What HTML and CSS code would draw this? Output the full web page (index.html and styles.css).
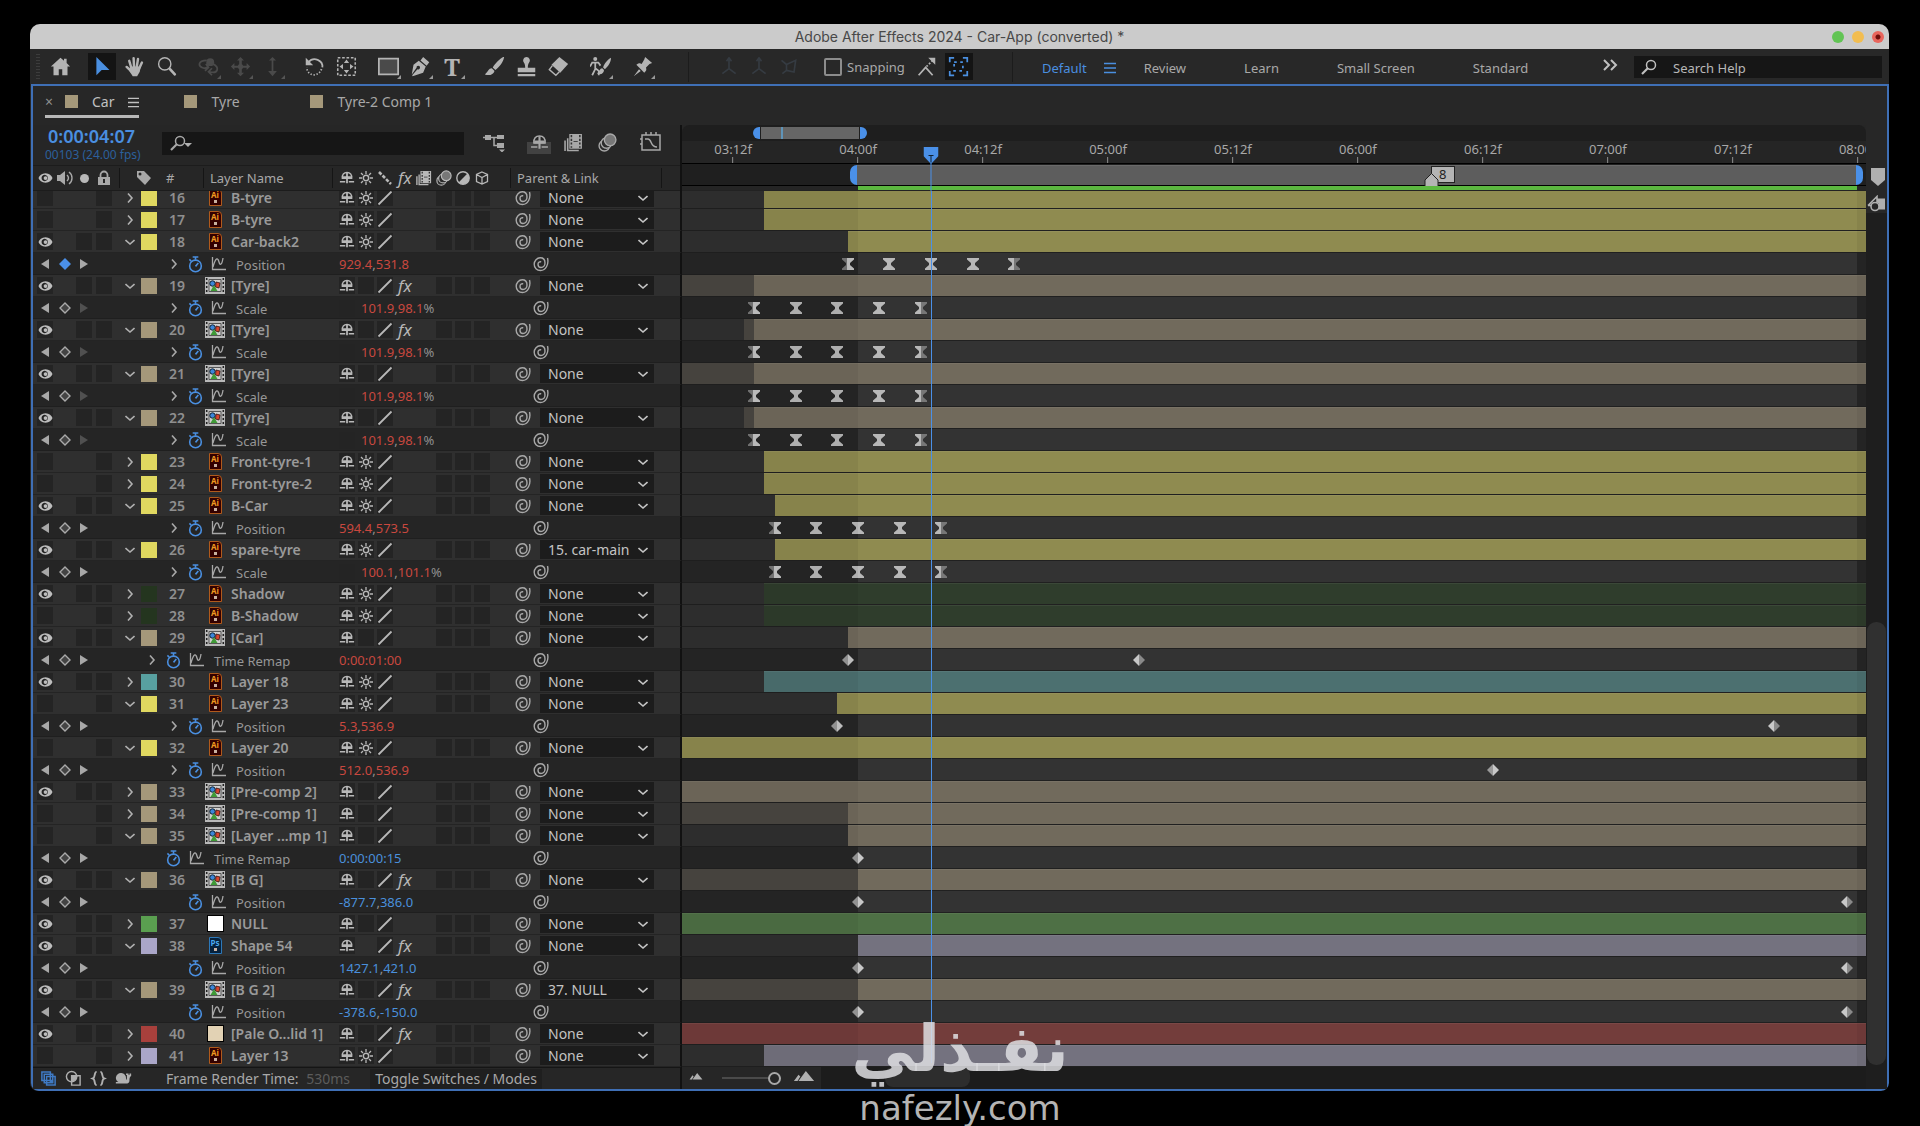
FILE: index.html
```html
<!DOCTYPE html>
<html lang="en">
<head>
<meta charset="utf-8">
<meta name="viewport" content="width=device-width, initial-scale=1">
<title>Adobe After Effects 2024 - Car-App (converted) *</title>
<link rel="stylesheet" href="styles.css">
</head>
<body>
<svg class="sprite" aria-hidden="true">
  <symbol id="home" viewBox="0 0 24 24"><path fill="currentColor" d="M12 2 1 12h3v10h6v-7h4v7h6V12h3l-4-4V3h-3v2.500z"/></symbol>
  <symbol id="arrow" viewBox="0 0 24 24"><path fill="currentColor" d="M5 1v21l6-6h9z"/></symbol>
  <symbol id="hand" viewBox="0 0 24 24"><path fill="none" stroke="currentColor" stroke-width="2.800" stroke-linecap="round" d="M8.500 14 6 5.500M11.500 13 11 2.500M14.500 13l1.500-9.500M17 15l3.500-7.500M9 18l-6-5.500"/><path fill="currentColor" d="M7 12h12l-1 6-3 5h-5l-4-6z"/></symbol>
  <symbol id="lens" viewBox="0 0 24 24"><circle cx="10" cy="9" r="7" fill="none" stroke="currentColor" stroke-width="1.600"/><path stroke="currentColor" stroke-width="3" stroke-linecap="round" d="m16 15 5.500 6"/></symbol>
  <symbol id="orbit" viewBox="0 0 24 24"><circle cx="14" cy="7" r="4.500" fill="currentColor"/><path fill="none" stroke="currentColor" stroke-width="2" d="M10 5C0 5-1 12 7 14l4-1M17 9c8 4 6 12-4 9M9 9l3 4-4 4M16 14l-4 4 4 4"/></symbol>
  <symbol id="pan" viewBox="0 0 24 24"><path fill="currentColor" d="m12 1 4 4h-2.500v4.500a3 3 0 0 1 1.500 1.500H19V8l4 4-4 4v-2.500h-4a3 3 0 0 1-1.500 1.500v4H16l-4 4-4-4h2.500v-4A3 3 0 0 1 9 13.500H5V16l-4-4 4-4v3h4a3 3 0 0 1 1.500-1.500V5H8z"/></symbol>
  <symbol id="dolly" viewBox="0 0 24 24"><path fill="currentColor" d="M11 4h2v13h4l-5 6-5-6h4z"/><path fill="currentColor" d="m12 1 4 4H8z"/></symbol>
  <symbol id="rotate" viewBox="0 0 24 24"><path fill="none" stroke="currentColor" stroke-width="2" d="M5 7c6-7 17-2 16 6"/><path fill="currentColor" d="M2 2v8.500h8.500z"/><path fill="none" stroke="currentColor" stroke-width="2" stroke-dasharray="1.500 2" d="M20 15c-3 9-16 9-17-2"/></symbol>
  <symbol id="anchor" viewBox="0 0 24 24"><path fill="none" stroke="currentColor" stroke-width="1.800" stroke-dasharray="3 2" d="M2 2h20v20H2z"/><path fill="currentColor" d="m12 4 3 4H9zM12 20l-3-4h6zM4 12l4-3v6zM20 12l-4 3V9z"/></symbol>
  <symbol id="rect" viewBox="0 0 24 24"><path fill="#4a4a4a" stroke="currentColor" stroke-width="2" d="M1 3h22v18H1z"/></symbol>
  <symbol id="pen" viewBox="0 0 24 24"><path fill="currentColor" d="m15 1 7 6-3 4-7-6zM10 5.500l8 6.500-3 7L3 23l-.500-1 6-7a2 2 0 1 0-1-1.500L2 21l2-11z"/></symbol>
  <symbol id="brush" viewBox="0 0 24 24"><path fill="currentColor" d="M22 1c-4 2-9 7-12 12l3 3c5-4 9-9 10-15zM9 14c-4 0-4 4-8 7 5 2 10 0 11-4z"/></symbol>
  <symbol id="stamp" viewBox="0 0 24 24"><path fill="currentColor" d="M12 1a4 4 0 0 1 3 6.500c-1 1.500-1.500 3-1.500 6H22v5H2v-5h8.500c0-3-.500-4.500-1.500-6A4 4 0 0 1 12 1zM2 20.500h20V23H2z"/></symbol>
  <symbol id="eraser" viewBox="0 0 24 24"><path fill="currentColor" d="m13 1 10 8-9 10L4 10z"/><path fill="none" stroke="currentColor" stroke-width="1.600" d="m5 11-3.500 4.500L9 22l4-4"/></symbol>
  <symbol id="roto" viewBox="0 0 24 24"><circle cx="6" cy="3.500" r="2.300" fill="currentColor"/><path fill="none" stroke="currentColor" stroke-width="2" d="M0 12l2.500-4.500h7L12 11M6 7v8l-3.500 7M6 14l4 3v5"/><path fill="currentColor" d="M24 2c-4 2-8 7-9 11l2 2c4-3 7-8 7-13zM14 14c-3 0-3 4-6 6 4 2 8 0 8-4z"/></symbol>
  <symbol id="pin" viewBox="0 0 24 24"><path fill="currentColor" d="m15 1 8 7-3 1-4 4c1 3 0 4-2 6L5 10c3-2 4-2 6-1l3-5zM8 15l2 2-8 6z"/></symbol>
  <symbol id="axis" viewBox="0 0 24 24"><path fill="none" stroke="currentColor" stroke-width="2" d="M12 3v11L4 20M12 14l8 6M9 5l3-4 3 4"/></symbol>
  <symbol id="axisview" viewBox="0 0 24 24"><path fill="none" stroke="currentColor" stroke-width="2" d="M3 4l6 5v7l-5 4M9 9l11-5-2 14-9-2"/></symbol>
  <symbol id="snapedge" viewBox="0 0 24 24"><path fill="none" stroke="currentColor" stroke-width="2" d="m3 22 8-9 8 9"/><path fill="currentColor" d="M22 2v8l-8-8z"/><path stroke="currentColor" stroke-width="2" stroke-dasharray="2 2" d="m12 12 7-7"/></symbol>
  <symbol id="snapbox" viewBox="0 0 24 24"><path fill="none" stroke="currentColor" stroke-width="2" d="M2 7V2h5M17 2h5v5M22 17v5h-5M7 22H2v-5"/><path fill="none" stroke="currentColor" stroke-width="2" stroke-dasharray="3 4" d="M7 7h10v10H7z"/></symbol>
  <symbol id="menu" viewBox="0 0 12 12"><path stroke="currentColor" stroke-width="1.500" d="M0 1.500h12M0 6h12M0 10.500h12"/></symbol>
  <symbol id="more" viewBox="0 0 16 12"><path fill="none" stroke="currentColor" stroke-width="2" d="m2 1 5 5-5 5M9 1l5 5-5 5"/></symbol>
  <symbol id="find" viewBox="0 0 16 16"><circle cx="10" cy="6" r="4.500" fill="none" stroke="currentColor" stroke-width="1.500"/><path stroke="currentColor" stroke-width="2.200" d="m7 9-6 6"/></symbol>
  <symbol id="flow" viewBox="0 0 24 18"><path fill="none" stroke="currentColor" stroke-width="1.500" d="M0 4h7M7 4h8M11 4v8h4"/><path fill="currentColor" d="M2 1.500h6v5H2zM14 1.500h7v4h-7zM14 9.500h7v5h-7zM16 16h6l-3 3z"/></symbol>
  <symbol id="shy" viewBox="0 0 18 16"><path fill="none" stroke="currentColor" stroke-width="1.500" d="M3.700 8.500C3.200 4 5.500 1.800 9 1.800s5.800 2.200 5.300 6.700z"/><path fill="currentColor" d="M4 6h10v3H4zM8 2h2v12H8zM1 11.500h6V13H1zM11 11.500h6V13h-6z"/></symbol>
  <symbol id="frames" viewBox="0 0 18 18"><path fill="none" stroke="currentColor" stroke-width="1.500" d="M3.500 5v11.500H14M1 7v10"/><path fill="currentColor" d="M5 1h12v14H5z"/><path stroke="#333" stroke-width="1.500" stroke-dasharray="2 1.500" d="M7 2v12M15 2v12"/><path stroke="#444" d="M9 8h4"/></symbol>
  <symbol id="blur" viewBox="0 0 18 18"><g fill="#2c2c2c" stroke="currentColor" stroke-width="1.300"><circle cx="6" cy="12" r="5"/><circle cx="8" cy="9.500" r="5"/><circle cx="11.500" cy="6.500" r="5.500" fill="#777"/></g></symbol>
  <symbol id="graphed" viewBox="0 0 22 20"><path fill="none" stroke="currentColor" stroke-width="1.500" d="M2 3v15h18V3zM6 0v3M11 0v3M16 0v3M0 7h2M0 12h2M5 7h3c4 0 2 8 9 8"/></symbol>
  <symbol id="eye" viewBox="0 0 16 12"><path fill="currentColor" fill-rule="evenodd" d="M8 1c4 0 6.500 2.500 7.500 5-1 2.500-3.500 5-7.500 5S1.500 8.500.500 6C1.500 3.500 4 1 8 1zm0 1.700A3.400 3.400 0 1 0 8 9.300 3.400 3.400 0 0 0 8 2.700z"/><circle cx="8" cy="6" r="2" fill="currentColor"/></symbol>
  <symbol id="audio" viewBox="0 0 16 16"><path fill="currentColor" d="M0 5h3l5-4v14l-5-4H0z"/><path fill="none" stroke="currentColor" stroke-width="1.400" d="M10 5c2 2 2 4 0 6M12 2c4 3 4 9 0 12"/></symbol>
  <symbol id="lock" viewBox="0 0 14 16"><path fill="none" stroke="currentColor" stroke-width="1.800" d="M3.500 8V5a3.500 3.500 0 0 1 7 0v3"/><path fill="currentColor" fill-rule="evenodd" d="M1 7h12v8H1zm5 2v4h2V9z"/></symbol>
  <symbol id="tag" viewBox="0 0 16 16"><path fill="currentColor" fill-rule="evenodd" d="M1 1h7l7 7-6 7-8-8zm3 1.500a1.500 1.500 0 1 0 0 3 1.500 1.500 0 0 0 0-3z"/></symbol>
  <symbol id="star" viewBox="0 0 16 16"><circle cx="8" cy="8" r="2.700" fill="none" stroke="currentColor" stroke-width="1.500"/><path stroke="currentColor" stroke-width="1.300" d="M8 1v3M8 12v3M1 8h3M12 8h3M3 3l2 2M11 11l2 2M13 3l-2 2M5 11l-2 2"/></symbol>
  <symbol id="slash" viewBox="0 0 16 16"><path stroke="currentColor" stroke-width="1.800" d="M1.500 14.500 14.500 1.500"/></symbol>
  <symbol id="qual" viewBox="0 0 16 16"><path stroke="currentColor" stroke-width="2.600" stroke-dasharray="3.500 1.500" d="m2 2 12 12"/></symbol>
  <symbol id="adjust" viewBox="0 0 16 16"><circle cx="8" cy="8" r="6.200" fill="none" stroke="currentColor" stroke-width="1.400"/><path fill="currentColor" d="M12.400 3.600A6.200 6.200 0 0 1 3.600 12.400z"/></symbol>
  <symbol id="cube" viewBox="0 0 16 16"><path fill="none" stroke="currentColor" stroke-width="1.300" d="m8 2 5.500 2.500v7L8 14l-5.500-2.500v-7zM2.500 4.500 8 7.500l5.500-3M8 7.500V14"/></symbol>
  <symbol id="right" viewBox="0 0 10 10"><path fill="none" stroke="currentColor" stroke-width="1.600" d="m3 .500 4 4.500-4 4.500"/></symbol>
  <symbol id="down" viewBox="0 0 10 10"><path fill="none" stroke="currentColor" stroke-width="1.600" d="m.500 3 4.500 4 4.500-4"/></symbol>
  <symbol id="whip" viewBox="0 0 16 16"><path fill="none" stroke="currentColor" stroke-width="1.400" d="M14.500 2C16 8 13 14.500 7.500 14.500 3.800 14.500 1.200 12 1.200 8.300S4 1.800 7.200 1.800 12 4 12 7s-1.800 4.500-4 4.500S5 10 5 8.300 6.300 5.500 8.200 5.800"/></symbol>
  <symbol id="watch" viewBox="0 0 16 18"><circle cx="8" cy="10.500" r="6.200" fill="none" stroke="currentColor" stroke-width="1.700"/><path fill="none" stroke="currentColor" stroke-width="1.700" d="M5 1h6M8 1v3M1.500 3.500l2 2M8 11l3-3.500"/></symbol>
  <symbol id="graph" viewBox="0 0 16 14"><path fill="none" stroke="currentColor" stroke-width="1.300" d="M1.500 0v12.500H15M2 10C5-1 7 1 8 5s3 3 4-4"/></symbol>
  <symbol id="prev" viewBox="0 0 8 10"><path fill="currentColor" d="M8 0v10L0 5z"/></symbol>
  <symbol id="next" viewBox="0 0 8 10"><path fill="currentColor" d="M0 0v10l8-5z"/></symbol>
  <symbol id="key" viewBox="0 0 12 12"><path fill="#444" stroke="#aaa" stroke-width="1.400" d="m6 1 5 5-5 5-5-5z"/></symbol>
  <symbol id="keyon" viewBox="0 0 12 12"><path fill="#4a8fe8" d="m6 0 6 6-6 6-6-6z"/></symbol>
  <symbol id="comp" viewBox="0 0 20 17"><path fill="#b9b9b9" d="M0 0h20v17H0z"/><path stroke="#222" stroke-width="1.500" stroke-dasharray="2 2" d="M1.700 1v15M18.300 1v15"/><path stroke="#555" fill="#d0d0d0" d="M4 2.500h12v12H4z"/><circle cx="7.500" cy="6.500" r="2.700" fill="#3c86d8" stroke="#123"/><path fill="#d8452e" stroke="#311" stroke-width=".8" d="m11 5 4 1-1 5-3.500-1z"/><path fill="#3f9a37" d="m9 8 3.500 6h-7z"/></symbol>
  <symbol id="hourglass" viewBox="0 0 12 12"><path fill="#b8b8b8" d="M0 0h12v1.500L8 5v2l4 3.500V12H0v-1.500L4 7V5L0 1.500z"/></symbol>
  <symbol id="hourin" viewBox="0 0 12 12"><path fill="#777" d="M0 0h6v12H0v-1.500L4 7V5L0 1.500z"/><path fill="#c4c4c4" d="M5 0h7v1.500L8 5v2l4 3.500V12H5z"/></symbol>
  <symbol id="hourout" viewBox="0 0 12 12"><path fill="#b8b8b8" d="M0 0h6v12H0v-1.500L4 7V5L0 1.500z"/><path fill="#777" d="M6 0h6v1.500L8 5v2l4 3.500V12H6z"/></symbol>
  <symbol id="diain" viewBox="0 0 12 12"><path fill="#999" d="M6 0v12L0 6z"/><path fill="#c8c8c8" d="M6 0v12l6-6z"/></symbol>
  <symbol id="diaout" viewBox="0 0 12 12"><path fill="#c8c8c8" d="M6 0v12L0 6z"/><path fill="#8a8a8a" d="M6 0v12l6-6z"/></symbol>
  <symbol id="copies" viewBox="0 0 18 18"><g fill="#232323" stroke="currentColor" stroke-width="1.600"><path d="M2 2h9v9H2zM4.500 4.500h9v9h-9zM7 7h9v9H7z"/><path d="M11 11h1v1h-1z"/></g></symbol>
  <symbol id="modes" viewBox="0 0 18 18"><circle cx="7" cy="7" r="5.500" fill="none" stroke="currentColor" stroke-width="1.500"/><path fill="none" stroke="currentColor" stroke-width="1.500" d="M7 6h9v10H7z"/><path fill="currentColor" d="M7 6h6a6 6 0 0 1-6 6z"/></symbol>
  <symbol id="braces" viewBox="0 0 18 18"><path fill="none" stroke="currentColor" stroke-width="2" d="M7 2C4 2 6 8 3 9c3 1 1 7 4 7M11 2c3 0 1 6 4 7-3 1-1 7-4 7"/></symbol>
  <symbol id="snail" viewBox="0 0 20 18"><path fill="currentColor" d="M1 8a6 6 0 0 1 12 1l1 2V5h-1V3h3v2h1V3h2v3c-2 1-2 3-2 6 0 2-2 3-4 3H1v-2h3c-2-1-3-3-3-5z"/></symbol>
  <symbol id="hills" viewBox="0 0 22 12"><path fill="currentColor" d="m0 11 5-7 2 2-3 5zM5 11l8-11 9 11z"/></symbol>
  <symbol id="bin" viewBox="0 0 18 16"><path fill="currentColor" d="M10 3h8v11h-6V8l-2-1z"/><path fill="none" stroke="currentColor" stroke-width="1.600" d="m1 10 9-9v6M1 10h6"/><circle cx="8" cy="11" r="4" fill="#262626" stroke="currentColor" stroke-width="1.600"/></symbol>
</svg>

<main class="window">
  <header class="titlebar">
    <h1>Adobe After Effects 2024 - Car-App (converted) *</h1>
    <div class="lights"><button class="light green" aria-label="Zoom"></button><button class="light amber" aria-label="Minimise"></button><button class="light red" aria-label="Close"></button></div>
  </header>

  <nav class="toolbar" aria-label="Tools">
    <div class="tools" id="tools"></div>
    <div class="snap">
      <span class="axes"><svg><use href="#axis"/></svg><svg><use href="#axis"/></svg><svg><use href="#axisview"/></svg></span>
      <label class="check"><input type="checkbox">Snapping</label>
      <button class="tool" aria-label="Snap to edges"><svg><use href="#snapedge"/></svg></button>
      <button class="tool active" aria-label="Snap to box"><svg><use href="#snapbox"/></svg></button>
    </div>
    <div class="spaces">
      <a href="#" class="current">Default</a>
      <button class="spacemenu" aria-label="Workspace menu"><svg><use href="#menu"/></svg></button>
      <a href="#">Review</a><a href="#">Learn</a><a href="#">Small Screen</a><a href="#">Standard</a>
      <button class="more" aria-label="More workspaces"><svg><use href="#more"/></svg></button>
    </div>
    <label class="help"><svg><use href="#find"/></svg><input type="text" aria-label="Search Help" placeholder="Search Help"></label>
  </nav>

  <section class="panel">
    <div class="tabs">
      <a href="#" class="tab selected"><span class="x">×</span><i></i>Car<svg><use href="#menu"/></svg></a>
      <a href="#" class="tab"><i></i>Tyre</a>
      <a href="#" class="tab"><i></i>Tyre-2 Comp 1</a>
    </div>

    <div class="body">
      <div class="main">
        <div class="top">
          <div class="controls">
            <div class="search-line">
              <div class="time"><strong>0:00:04:07</strong><span>00103 (24.00 fps)</span></div>
              <label class="filter"><svg><use href="#find"/></svg><b></b><input type="text" aria-label="Filter layers"></label>
              <button aria-label="Flowchart"><svg class="w24"><use href="#flow"/></svg></button>
              <button class="on" aria-label="Hide shy layers"><svg><use href="#shy"/></svg></button>
              <button aria-label="Frame blending"><svg><use href="#frames"/></svg></button>
              <button aria-label="Motion blur"><svg><use href="#blur"/></svg></button>
              <button class="last" aria-label="Graph editor"><svg class="w22"><use href="#graphed"/></svg></button>
            </div>
            <div class="cols head">
              <span class="c"><svg class="eye"><use href="#eye"/></svg></span>
              <span class="c"><svg><use href="#audio"/></svg></span>
              <span class="c"><i class="solo"></i></span>
              <span class="c"><svg><use href="#lock"/></svg></span>
              <span class="h-tag"><svg><use href="#tag"/></svg></span>
              <span class="h-num">#</span>
              <span class="h-name">Layer Name</span>
              <span class="switches">
                <svg><use href="#shy"/></svg><svg><use href="#star"/></svg><svg><use href="#qual"/></svg><em>fx</em><svg><use href="#frames"/></svg><svg><use href="#blur"/></svg><svg><use href="#adjust"/></svg><svg><use href="#cube"/></svg>
              </span>
              <span class="h-parent">Parent &amp; Link</span>
            </div>
          </div>
          <div class="ruler" id="ruler">
            <div class="navigator"><i class="lead"></i><i class="grab left"></i><i class="span"></i><i class="grab right"></i></div>
            <div class="scale" id="scale"></div>
            <div class="workarea"><i class="outer"></i><i class="grab left"></i><i class="range"></i><i class="grab right"></i></div>
            <div class="cache"><i></i></div>
          </div>
        </div>
        <div class="layers">
          <div class="list" id="layers"></div>
          <div class="over"><i class="before"></i><i class="after"></i><i class="cti"></i></div>
        </div>
        <footer class="foot">
          <div class="foot-left">
            <button class="blue" aria-label="Layer switches"><svg><use href="#copies"/></svg></button>
            <button aria-label="Transfer controls"><svg><use href="#modes"/></svg></button>
            <button aria-label="In and out"><svg><use href="#braces"/></svg></button>
            <button aria-label="Render time"><svg><use href="#snail"/></svg></button>
            <span class="render">Frame Render Time: <b>530ms</b></span>
            <button class="toggle">Toggle Switches / Modes</button>
          </div>
          <div class="foot-zoom"><svg class="far"><use href="#hills"/></svg><input type="range" value="100" aria-label="Timeline zoom"><svg class="near"><use href="#hills"/></svg></div>
          <div class="hscroll"><i></i></div>
        </footer>
      </div>
      <aside class="rail">
        <div class="rail-top"><svg class="mark" viewBox="0 0 14 18"><path fill="currentColor" d="M0 0h14v12l-7 6-7-6z"/></svg><svg class="bin"><use href="#bin"/></svg></div>
        <div class="vscroll"><i></i></div>
      </aside>
    </div>
  </section>
</main>

<div class="brand"><span lang="ar" dir="rtl">نفـذلي</span><small>nafezly.com</small></div>
<script src="script.js"></script>
</body>
</html>
```

FILE: styles.css
```css
* { box-sizing: border-box; }
:root {
  --blue: #4a8fe0;
  --line: #3f6fb5;
  --bg: #262626;
  --txt: #a8a8a8;
  --dark: #161616;
}
body {
  margin: 0;
  padding: 24px 31px 36px 30px;
  background: #000;
  color: var(--txt);
  font: 14px/20px "Noto Sans", "Open Sans", sans-serif;
  position: relative;
}
.sprite { position: absolute; width: 0; height: 0; }
svg { display: block; width: 16px; height: 16px; flex: none; }
button { border: 0; padding: 0; background: none; color: inherit; font: inherit; display: grid; place-items: center; }
input, select { font: inherit; color: inherit; }
a { color: inherit; text-decoration: none; }
i { display: block; }

.window { background: var(--bg); border-radius: 10px 10px 8px 8px; overflow: hidden; }
.titlebar { display: grid; grid-template-columns: 1fr auto 1fr; align-items: center; height: 25px; background: #cbcbcb; }
.titlebar h1 { grid-column: 2; margin: 0; font: 14px/24px Inter, sans-serif; color: #484848; }
.lights { display: flex; justify-content: flex-end; gap: 8px; padding-right: 5px; }
.light { width: 12px; height: 12px; border-radius: 50%; }
.green { background: #62c454; }
.amber { background: #f2bd50; }
.red { background: radial-gradient(circle, #6d0d0a 2px, #e8655c 3px); }

/* Toolbar */
.toolbar { display: flex; align-items: center; height: 35px; background: #282828; }
.tools { display: flex; align-items: center; padding-left: 6px; flex: none; width: 659px; border-right: 1px solid #1c1c1c; height: 30px; }
.tool { position: relative; width: 28px; height: 27px; flex: none; margin-right: 4px; color: #b4b4b4; }
.tool svg { width: 21px; height: 21px; }
.tool.wide { margin-right: 14px; }
.tool.dim { color: #4a4a4a; }
.tool.active { background: #141414; color: var(--blue); }
.tool.sub::after { content: ""; position: absolute; right: 1px; bottom: 1px; border: 2px solid; border-color: transparent #999 #999 transparent; }
.tool.dim::after { opacity: .4; }
.tool.type { font: bold 24px/26px "Noto Serif", "Liberation Serif", serif; }
.grip { width: 4px; height: 26px; margin-right: 6px; background: repeating-linear-gradient(#3c3c3c 0 1px, #282828 1px 3px); }
.snap { display: flex; align-items: center; flex: none; width: 324px; height: 30px; padding-left: 30px; border-right: 1px solid #1c1c1c; font-size: 13px; }
.axes { display: flex; gap: 10px; color: #353b42; margin-right: 25px; }
.axes svg { width: 20px; height: 20px; }
.check { display: flex; align-items: center; gap: 5px; margin-right: 8px; }
.check input { appearance: none; width: 18px; height: 18px; margin: 0; border: 2px solid #8c8c8c; border-radius: 2px; }
.spaces { display: flex; align-items: center; flex: 1; padding: 3px 16px 0 29px; font-size: 13px; }
.spaces a { margin-right: 58px; white-space: nowrap; }
.spaces .current { color: var(--blue); margin-right: 17px; }
.spacemenu { color: var(--blue); margin-right: 28px; }
.spacemenu svg { width: 12px; height: 12px; }
.more { margin: 0 0 6px auto; color: #c0c0c0; }
.more svg { width: 16px; height: 12px; }
.help { display: flex; align-items: center; gap: 16px; width: 248px; height: 22px; padding-left: 7px; margin-right: 7px; background: var(--dark); color: #c0c0c0; flex: none; }
.help input { width: 180px; border: 0; padding: 2px 0 0; background: none; font-size: 13px; }
.help input::placeholder { color: #b8b8b8; opacity: 1; }

/* Panel */
.panel { border: 2px solid var(--line); border-radius: 0 0 8px 8px; margin-left: 1px; }
.tabs { display: flex; height: 39px; padding: 0 12px; gap: 45px; background: #272727; }
.tab { display: flex; align-items: center; gap: 14px; height: 32px; min-width: 81px; }
.tab i { width: 13px; height: 13px; background: #a5987a; margin-bottom: 2px; }
.tab svg { width: 11px; height: 11px; }
.tab.selected { border-bottom: 3px solid #b8b8b8; color: #c0c0c0; padding-top: 3px; }
.tab .x { width: 6px; color: #909090; }

.body { display: flex; }
.main { flex: 1; min-width: 0; }
.top { display: flex; height: 66px; }
.controls { width: 649px; flex: none; border-right: 2px solid #111; }
.search-line { display: flex; align-items: center; height: 41px; border-bottom: 1px solid #1c1c1c; }
.time { display: flex; flex-direction: column; width: 129px; padding-left: 12px; color: var(--blue); white-space: nowrap; }
.time strong { font: 600 18px/20px "Noto Sans", sans-serif; padding-left: 3px; }
.time span { font-size: 12px; line-height: 18px; color: #2c609c; }
.filter { display: flex; align-items: center; width: 302px; height: 23px; margin: 0 19px 4px 0; padding-left: 8px; background: var(--dark); }
.filter input { width: 250px; border: 0; background: none; outline: 0; }
.filter b { border: 4px solid transparent; border-top-color: #b0b0b0; margin: 8px 0 0 -2px; }
.search-line button { width: 24px; height: 24px; margin: 0 10px 6px 0; color: #a8a8a8; }
.search-line button:first-of-type { margin-right: 20px; }
.search-line button svg { width: 19px; height: 19px; }
.search-line .w24 { width: 24px; }
.search-line .last { margin-left: 10px; }
.search-line .last .w22 { width: 22px; height: 20px; }
.search-line .on { background: linear-gradient(transparent 50%, #424242 50%); }

.cols { display: grid; grid-template-columns: 20px 19px 20px 19px 28px 16px 46px 24px 110px 155px 18px 26px 4px 114px 1fr; width: 649px; flex: none; padding-left: 2px; align-items: center; border-right: 2px solid #111; white-space: nowrap; }
.c { display: grid; place-items: center; }
.head { width: 647px; height: 25px; border-right: 0; font-size: 13px; border-bottom: 1px solid #1c1c1c; }
.head svg { width: 16px; height: 16px; }
.head .eye { width: 15px; height: 12px; }
.solo { width: 9px; height: 9px; border-radius: 50%; background: #b8b8b8; }
.h-tag { grid-column: 5 / 7; display: grid; align-items: center; margin-left: 6px; padding-left: 16px; border-left: 1px solid #151515; height: 20px; }
.h-num { padding-left: 9px; }
.h-name { grid-column: 8 / 10; border-left: 1px solid #151515; border-right: 1px solid #151515; margin-right: 4px; padding-left: 6px; }
.h-parent { grid-column: 12 / 16; border-left: 1px solid #151515; border-right: 1px solid #151515; padding-left: 6px; margin-right: 18px; }
.switches { display: grid; grid-template-columns: repeat(8, 1fr); justify-items: center; align-items: center; color: #b8b8b8; }
.switches em { font: italic 17px/18px "Noto Sans", sans-serif; }

/* Ruler: frame positions are percentages of the visible range */
.ruler { flex: 1; position: relative; background: #252525; border-radius: 8px 8px 0 0; }
.navigator { display: flex; height: 16px; padding: 2px 0; background: #1e1e1e; border-radius: 8px 8px 0 0; }
.navigator .lead { width: 6%; }
.navigator .span { width: 98px; margin: 0 1px; background: linear-gradient(90deg, #666 0 20px, #5f94b8 20px 22px, #666 22px); }
.grab { width: 7px; background: #4a90e8; }
.grab.left { border-radius: 7px 0 0 7px; }
.grab.right { border-radius: 0 7px 7px 0; }
.scale { position: relative; height: 23px; overflow: hidden; font-size: 13px; line-height: 16px; border-bottom: 1px solid #000; }
.stop { position: absolute; top: 0; bottom: 0; display: flex; flex-direction: column; align-items: center; transform: translateX(-50%); }
.stop::after { content: ""; width: 1px; flex: 1; background: #8f8f8f; }
.workarea { display: flex; height: 22px; background: #1f1f1f; border-bottom: 1px solid #000; padding-top: 1px; }
.workarea .outer { width: 14.864%; margin-right: -8px; }
.workarea .range { width: 84.388%; background: #5d5d5d; border-top: 1px solid #6a6a6a; }
.cache { height: 5px; padding-left: 14.864%; border-bottom: 1px solid #222; }
.cache i { width: 99.100%; height: 4px; background: #5cb840; }
.marker { position: absolute; top: 41px; display: flex; height: 17px; width: 24px; justify-content: center; background: #b4b4b4; border: 1px solid #222; color: #222; font-size: 13px; line-height: 15px; }
.marker svg { position: absolute; left: -8px; top: 6px; width: 15px; height: 13px; }
.ctihead { position: absolute; top: 21px; bottom: 0; width: 15px; transform: translateX(-50%); }
.ctihead svg { width: 15px; height: 18px; }
.ctihead::after { content: ""; position: absolute; left: 7px; top: 16px; bottom: 0; width: 1px; background: #4a90e8; }

/* Layer rows */
.layers { position: relative; overflow: hidden; background: var(--bg); }
.list { margin-top: -4px; }
.row { display: flex; height: 22px; }
.row .cols { border-bottom: 1px solid #242424; background: #2f2f2f; }
.row.prop .cols { background: #252525; border-bottom-color: #1f1f1f; }
.box { width: 16px; height: 17px; background: #242424; display: grid; place-items: center; }
.eye { width: 15px; height: 12px; color: #bdbdbd; }
.twirl { justify-self: end; margin-right: 6px; color: #b0b0b0; }
.twirl svg { width: 10px; height: 10px; }
.swatch { width: 16px; height: 16px; }
.num { padding-left: 12px; font-weight: 600; color: #8f8f8f; }
.kind { justify-self: center; }
.kind svg { width: 20px; height: 17px; }
.file { width: 13px; height: 17px; border: 1px solid #b05a1c; background: #300; color: #f09a20; font: bold 8px/9px "Noto Sans", sans-serif; text-align: center; border-radius: 0 4px 0 0; }
.file::after { content: ""; display: block; width: 3px; height: 3px; margin: 1px auto 0; background: #c8b0a0; }
.file.ps { border-color: #2d78b8; background: #06213c; color: #4aa8f0; }
.solid { width: 17px; height: 17px; border: 1px solid #000; }
.name { padding-left: 4px; font-weight: 600; color: #9a9a9a; overflow: hidden; }
.switches .box svg { width: 16px; height: 16px; }
.row .whip { color: #a8a8a8; justify-self: center; }
.row .whip svg { width: 16px; height: 16px; }
.pick { grid-column: 14; display: grid; align-items: center; height: 19px; background: #1c1c1c; color: #c4c4c4; }
.pick select, .pick svg { grid-area: 1 / 1; }
.pick select { appearance: none; border: 0; width: 100%; height: 19px; padding: 0 0 0 8px; background: none; line-height: 18px; }
.pick svg { width: 10px; height: 10px; justify-self: end; margin-right: 6px; pointer-events: none; }

.prop .keys { grid-column: 1 / 4; display: flex; align-items: center; padding-left: 6px; }
.keys button { width: 8px; margin-right: 10px; }
.keys .k { width: 12px; margin-right: 9px; }
.keys svg { width: 8px; height: 10px; }
.keys .k svg { width: 12px; height: 12px; }
.keys .off { color: #505050; }
.prop .stack { grid-column: 5 / 10; display: flex; align-items: center; padding-left: 56px; }
.prop.root .stack { padding-left: 34px; }
.stack .tw { width: 10px; height: 10px; margin-right: 9px; }
.stack .watch { width: 15px; height: 17px; color: #4a8fe0; margin-right: 8px; }
.stack .graph { width: 16px; height: 14px; margin-right: 9px; }
.stack .label { padding-top: 2px; color: #979797; font-size: 13px; }
.value { grid-column: 10; display: flex; align-items: center; padding-left: 2px; color: #909090; font-size: 13px; }
.value .box { margin-right: 6px; }
.value b { font-weight: 400; color: #c9483f; }
.value.free b { color: #4a90dc; }
.prop .whip { grid-column: 12 / 15; justify-self: start; margin-left: 23px; }

.track { flex: 1; display: flex; position: relative; background: #303030; border-bottom: 1px solid #202020; }
.prop .track { background: linear-gradient(90deg, #262626 14.864%, #333 14.864% 99.240%, #262626 99.240%); }
.bar { flex: 1; border-top: 1px solid rgba(255, 255, 255, .06); }
.ghost { background: #4a4742; }
.track svg { position: absolute; top: 5px; width: 12px; height: 12px; transform: translateX(-50%); }
.yellow { background: #8f8b50; }
.sand { background: #716a5c; }
.forest { background: #2f3d2c; }
.teal { background: #4c7070; }
.leaf { background: #4e7045; }
.lilac { background: #74727f; }
.brick { background: #733d3b; }
.over { position: absolute; left: 649px; right: 0; top: 0; bottom: 0; pointer-events: none; display: flex; }
.over .before { width: 14.864%; background: rgba(0, 0, 0, .05); }
.over .after { width: 0.760%; margin-left: auto; background: rgba(0, 0, 0, .05); }
.over .cti { position: absolute; left: 21.030%; top: 0; bottom: 4px; width: 1px; background: #4a90e8; }

/* Footer */
.foot { display: flex; height: 22px; background: #1c1c1c; }
.foot-left { display: flex; align-items: center; width: 649px; padding-left: 6px; background: #262626; border-top: 1px solid #151515; border-right: 2px solid #111; }
.foot-left button { width: 18px; margin-right: 7px; color: #b0b0b0; }
.foot-left .blue { color: #3f7ac4; }
.foot-left svg { width: 17px; height: 17px; }
.render { margin-left: 27px; }
.render b { font-weight: 400; color: #5c5c5c; margin-left: 4px; }
.foot-left .toggle { width: 172px; height: 20px; margin-left: 20px; background: #1f1f1f; color: #a8a8a8; white-space: nowrap; }
.foot-zoom { display: flex; align-items: center; width: 139px; padding-left: 7px; background: #262626; color: #b0b0b0; }
.foot-zoom .far { width: 14px; height: 7px; margin: 0 19px 3px 0; }
.foot-zoom .near { width: 22px; height: 11px; margin: 0 0 3px 12px; }
.foot-zoom input { appearance: none; width: 59px; height: 13px; margin: 0; background: linear-gradient(transparent 5px, #4a4a4a 5px 7px, transparent 7px); }
.foot-zoom input::-webkit-slider-thumb { appearance: none; width: 13px; height: 13px; border: 2px solid #a8a8a8; border-radius: 50%; background: #262626; }
.hscroll { flex: 1; padding-left: 64px; }
.hscroll i { width: 85px; height: 20px; border-radius: 8px; background: #2d2d2d; }
.rail { width: 21px; background: #1e1e1e; display: flex; flex-direction: column; color: #b0b0b0; }
.rail-top { height: 88px; padding: 43px 0 0 5px; background: #272727; }
.rail .mark { width: 14px; height: 18px; }
.rail .bin { width: 18px; height: 17px; margin: 9px 0 0 -4px; }
.vscroll { flex: 1; display: flex; flex-direction: column; justify-content: flex-end; padding: 0 1px 24px; }
.vscroll i { height: 52%; border-radius: 9px; background: #303030; }

.brand { position: absolute; left: 0; right: 0; bottom: 0; display: flex; flex-direction: column; align-items: center; color: rgba(222, 222, 226, .85); pointer-events: none; }
.brand span { font: bold 64px/80px "DejaVu Sans", sans-serif; }
.brand small { font: 34px/38px "DejaVu Sans", sans-serif; color: #b4b4b4; }
```

FILE: script.js
```js
const FIRST = 79.09;   // frame at the left edge of the timeline
const SHOWN = 113.7;   // frames visible
const pos = f => ((f - FIRST) / SHOWN * 100).toFixed(3) + '%';
const icon = (id, cls = '') => `<svg${cls && ` class="${cls}"`}><use href="#${id}"/></svg>`;

const tools = [
  ['home', 'Home', 'wide'], ['arrow', 'Selection', 'active'], ['hand', 'Hand', ''], ['lens', 'Zoom', 'wide'],
  ['orbit', 'Orbit', 'dim sub'], ['pan', 'Pan camera', 'dim sub'], ['dolly', 'Dolly', 'dim sub wide'],
  ['rotate', 'Rotation', ''], ['anchor', 'Anchor point', 'wide'],
  ['rect', 'Rectangle', 'sub'], ['pen', 'Pen', 'sub'], ['type', 'Type', 'sub wide'],
  ['brush', 'Brush', ''], ['stamp', 'Clone stamp', ''], ['eraser', 'Eraser', 'wide'],
  ['roto', 'Roto brush', 'sub wide'], ['pin', 'Puppet pin', 'sub']
];
document.getElementById('tools').innerHTML = '<span class="grip"></span>' + tools.map(([id, name, cls]) =>
  id === 'type' ? `<button class="tool type ${cls}" aria-label="${name}">T</button>`
                : `<button class="tool ${cls}" aria-label="${name}">${icon(id)}</button>`).join('');

const labels = ['03:12f', '04:00f', '04:12f', '05:00f', '05:12f', '06:00f', '06:12f', '07:00f', '07:12f', '08:00f'];
document.getElementById('scale').innerHTML = labels.map((t, i) => `<span class="stop" style="left:${pos(84 + i * 12)}">${t}</span>`).join('');
document.getElementById('ruler').insertAdjacentHTML('beforeend',
  `<span class="marker" style="left:${pos(151)}">8<svg viewBox="0 0 15 13"><path d="M1 13V7l6.500-6.500L14 7v6" fill="#b4b4b4" stroke="#222"/></svg></span>
   <span class="ctihead" style="left:${pos(103)}"><svg viewBox="0 0 15 18"><path fill="#4a90e8" d="M0 1h15v9l-7.500 8L0 10z"/><path stroke="#123" d="M5 9.500h5M7.500 9v9"/></svg></span>`);

const swatches = { yellow: '#e0d860', sand: '#a5987a', forest: '#24351f', teal: '#58a0a0', leaf: '#5a9f50', lilac: '#aaa6c8', brick: '#a8403c' };

const L = (n, name, kind, color, start, o = {}) => ({ n, name, kind, color, start, ...o });
const P = (label, value, keys, o = {}) => ({ label, value, keys, ...o });
const pos5 = [95, 99, 103, 107, 111], scale5 = [86, 90, 94, 98, 102], car5 = [88, 92, 96, 100, 104];
const tyre = () => P('Scale', '101.9,98.1', scale5, { pct: 1, end: 1 });
const hid = { hidden: 1 }, open = { open: 1 };

const rows = [
  L(16, 'B-tyre', 'ai', 'yellow', 87, hid), L(17, 'B-tyre', 'ai', 'yellow', 87, hid),
  L(18, 'Car-back2', 'ai', 'yellow', 95, open), P('Position', '929.4,531.8', pos5, { on: 1 }),
  L(19, '[Tyre]', 'comp', 'sand', 86, { open: 1, fx: 1, ghost: FIRST }), tyre(),
  L(20, '[Tyre]', 'comp', 'sand', 86, { open: 1, fx: 1, ghost: 85 }), tyre(),
  L(21, '[Tyre]', 'comp', 'sand', 86, { open: 1, ghost: FIRST }), tyre(),
  L(22, '[Tyre]', 'comp', 'sand', 86, { open: 1, ghost: 85 }), tyre(),
  L(23, 'Front-tyre-1', 'ai', 'yellow', 87, hid), L(24, 'Front-tyre-2', 'ai', 'yellow', 87, hid),
  L(25, 'B-Car', 'ai', 'yellow', 88, open), P('Position', '594.4,573.5', car5),
  L(26, 'spare-tyre', 'ai', 'yellow', 88, { open: 1, parent: '15. car-main' }), P('Scale', '100.1,101.1', car5, { pct: 1 }),
  L(27, 'Shadow', 'ai', 'forest', 87), L(28, 'B-Shadow', 'ai', 'forest', 87, hid),
  L(29, '[Car]', 'comp', 'sand', 95, open), P('Time Remap', '0:00:01:00', [95, 123], { root: 1, dia: 1 }),
  L(30, 'Layer 18', 'ai', 'teal', 87), L(31, 'Layer 23', 'ai', 'yellow', 94, { hidden: 1, open: 1 }),
  P('Position', '5.3,536.9', [94, 184], { dia: 1 }),
  L(32, 'Layer 20', 'ai', 'yellow', FIRST, { hidden: 1, open: 1 }), P('Position', '512.0,536.9', [157], { dia: 1 }),
  L(33, '[Pre-comp 2]', 'comp', 'sand', FIRST), L(34, '[Pre-comp 1]', 'comp', 'sand', 95, { hidden: 1, ghost: FIRST }),
  L(35, '[Layer ...mp 1]', 'comp', 'sand', 95, { hidden: 1, open: 1 }),
  P('Time Remap', '0:00:00:15', [96], { root: 1, dia: 1, free: 1 }),
  L(36, '[B G]', 'comp', 'sand', 96, { open: 1, fx: 1, ghost: FIRST }), P('Position', '-877.7,386.0', [96, 191], { dia: 1, free: 1 }),
  L(37, 'NULL', 'white', 'leaf', FIRST),
  L(38, 'Shape 54', 'ps', 'lilac', 96, { open: 1, fx: 1 }), P('Position', '1427.1,421.0', [96, 191], { dia: 1, free: 1 }),
  L(39, '[B G 2]', 'comp', 'sand', 96, { open: 1, fx: 1, ghost: FIRST, parent: '37. NULL' }),
  P('Position', '-378.6,-150.0', [96, 191], { dia: 1, free: 1 }),
  L(40, '[Pale O...lid 1]', 'cream', 'brick', FIRST, { fx: 1 }), L(41, 'Layer 13', 'ai', 'lilac', 87, hid)
];

const kinds = {
  ai: '<div class="file">Ai</div>', ps: '<div class="file ps">Ps</div>', comp: icon('comp'),
  white: '<div class="solid" style="background:#fff"></div>', cream: '<div class="solid" style="background:#e2d2b4"></div>'
};
const box = (s = '') => `<span class="box">${s}</span>`;
const width = (a, b) => ((b - a) / SHOWN * 100).toFixed(3) + '%';

function layer(r) {
  const from = r.ghost ?? r.start;
  return `<div class="row"><div class="cols">
    <span class="c">${box(r.hidden ? '' : icon('eye', 'eye'))}</span><span></span>
    <span class="c">${r.hidden ? '' : box()}</span><span class="c">${box()}</span>
    <button class="twirl" aria-label="Expand layer ${r.n}">${icon(r.open ? 'down' : 'right')}</button>
    <span class="swatch" style="background:${swatches[r.color]}"></span>
    <span class="num">${r.n}</span><span class="kind">${kinds[r.kind]}</span><span class="name">${r.name}</span>
    <span class="switches">${box(icon('shy'))}${r.kind === 'ps' ? '<span></span>' : box(r.kind === 'ai' ? icon('star') : '')}${box(icon('slash'))}${r.fx ? '<em>fx</em>' : '<span></span>'}<span></span>${box()}${box()}${box()}</span>
    <span></span><button class="whip" aria-label="Pick whip ${r.n}">${icon('whip')}</button>
    <label class="pick"><select aria-label="Parent of layer ${r.n}"><option>${r.parent || 'None'}</option></select>${icon('down')}</label>
  </div><div class="track"><i style="width:${width(FIRST, from)}"></i>${r.ghost ? `<i class="ghost" style="width:${width(r.ghost, r.start)}"></i>` : ''}<i class="bar ${r.color}"></i></div></div>`;
}

function prop(r) {
  const last = r.keys.length - 1;
  const shape = i => r.dia ? (i ? 'diaout' : 'diain') : i === 0 ? 'hourin' : i === last ? 'hourout' : 'hourglass';
  const text = r.value.includes(',') ? r.value.split(',').map(v => `<b>${v}</b>`).join(',') : `<b>${r.value}</b>`;
  return `<div class="row prop${r.root ? ' root' : ''}"><div class="cols">
    <span class="keys"><button aria-label="Previous keyframe">${icon('prev')}</button><button class="k" aria-label="Keyframe">${icon(r.on ? 'keyon' : 'key')}</button><button class="${r.end ? 'off' : ''}" aria-label="Next keyframe">${icon('next')}</button></span>
    <span class="stack">${r.free ? '<span class="tw"></span>' : icon('right', 'tw')}${icon('watch', 'watch')}${icon('graph', 'graph')}<span class="label">${r.label}</span></span>
    <span class="value${r.free ? ' free' : ''}">${r.pct ? box() : ''}<span>${text}${r.pct ? '%' : ''}</span></span>
    <button class="whip" aria-label="Link ${r.label}">${icon('whip')}</button>
  </div><div class="track">${r.keys.map((f, i) => `<svg style="left:${pos(f)}"><use href="#${shape(i)}"/></svg>`).join('')}</div></div>`;
}

document.getElementById('layers').innerHTML = rows.map(r => r.n ? layer(r) : prop(r)).join('');
```
